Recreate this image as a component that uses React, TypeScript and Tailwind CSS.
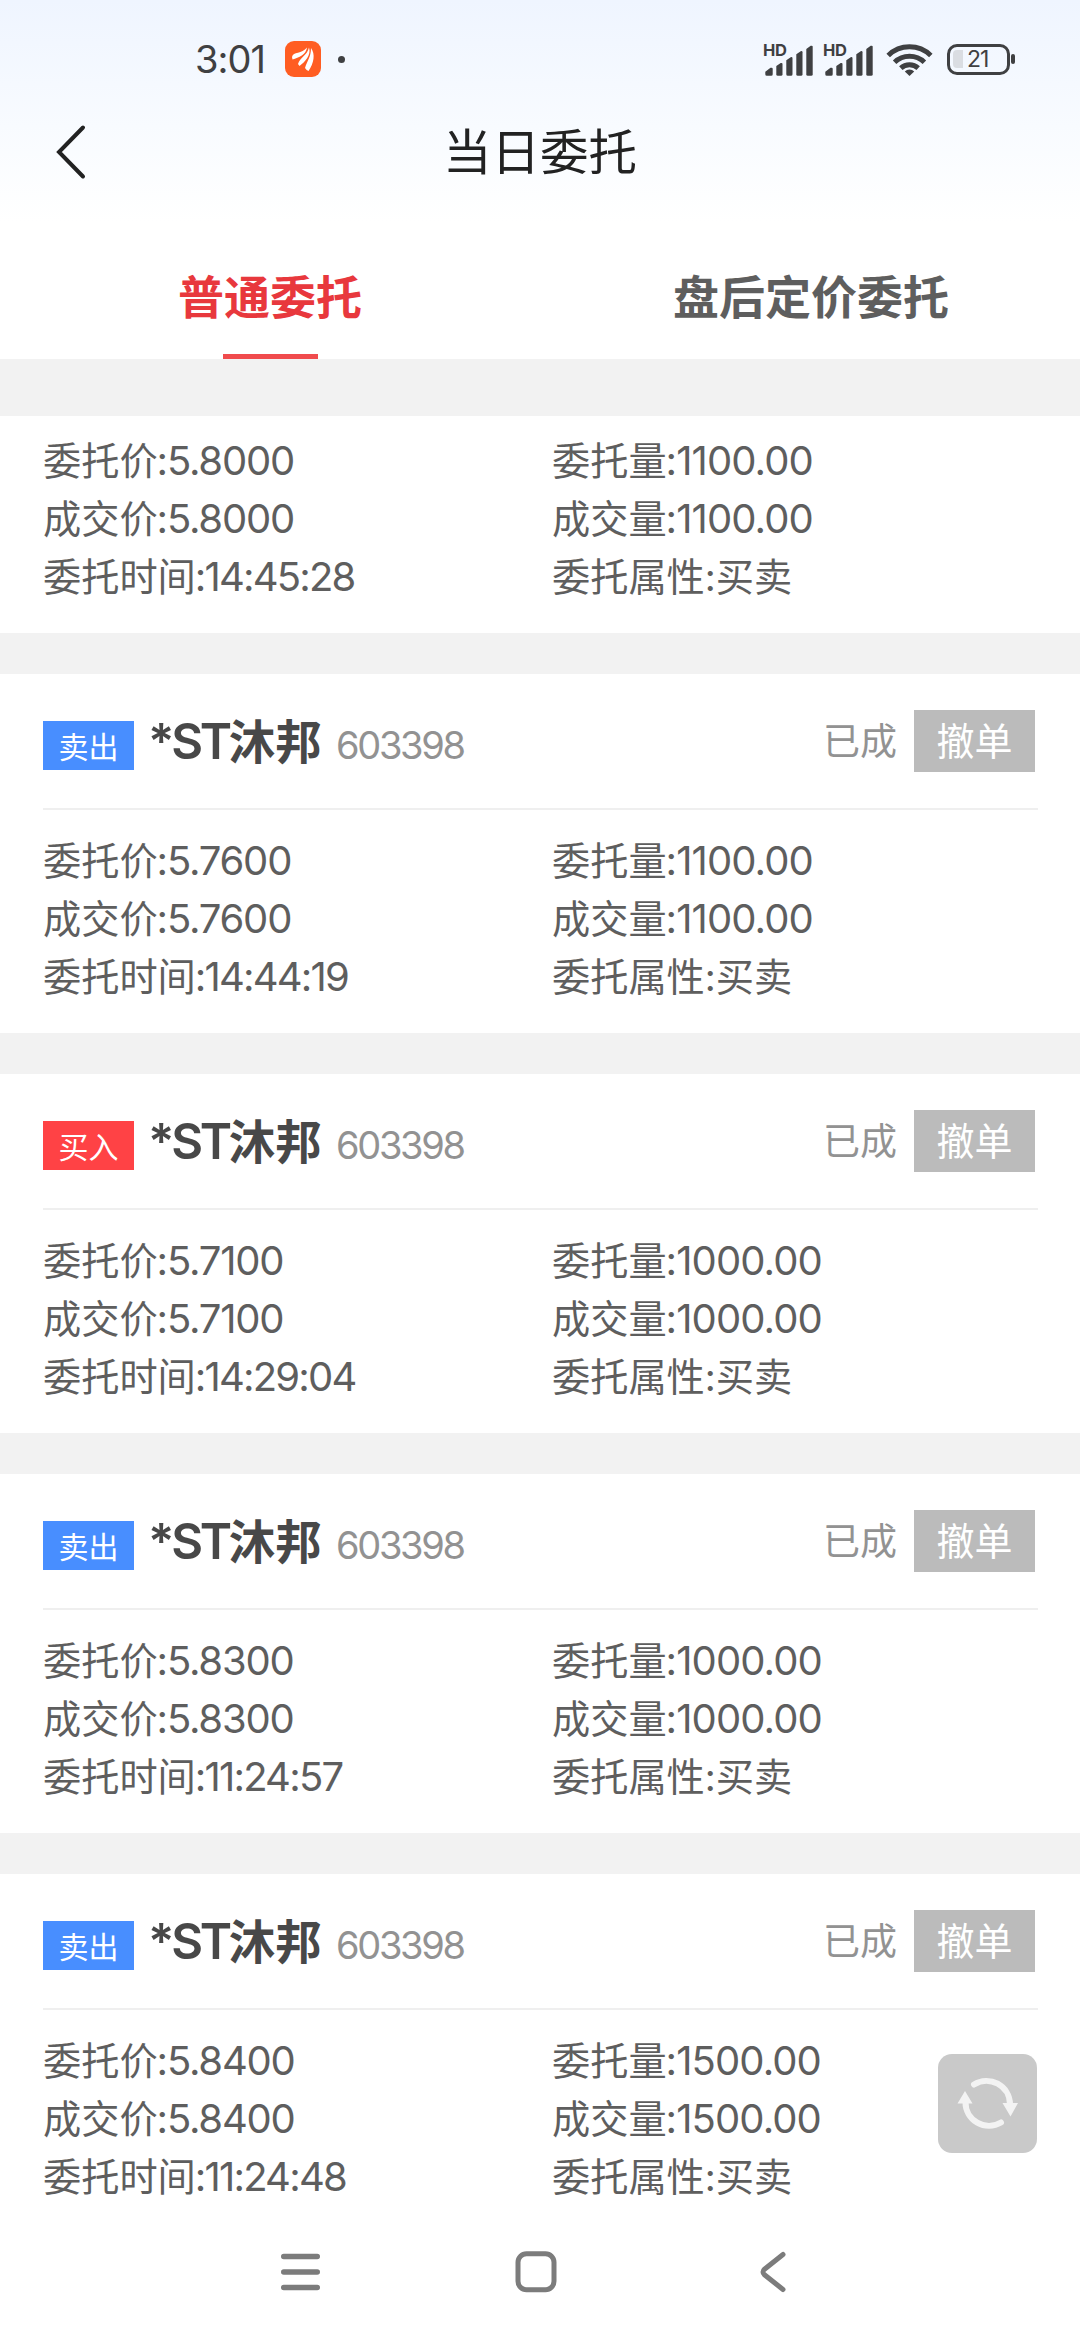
type Order = {
  side: "buy" | "sell";
  price: string;
  amount: string;
  time: string;
};

const orders: Order[] = [
  { side: "sell", price: "5.7600", amount: "1100.00", time: "14:44:19" },
  { side: "buy", price: "5.7100", amount: "1000.00", time: "14:29:04" },
  { side: "sell", price: "5.8300", amount: "1000.00", time: "11:24:57" },
  { side: "sell", price: "5.8400", amount: "1500.00", time: "11:24:48" },
];

function Signal() {
  return (
    <svg className="w-[52px] h-[36px]" viewBox="0 0 52 36" fill="#3f4042">
      <text x="0" y="14.8" fontSize="16.5" fontWeight="700" fontFamily="Inter, sans-serif" textLength="24">HD</text>
      <path d="M2.3 33.3v-2.6l5.2-3.9q2.2-.6 2.2 1v5.5q0 1.5-1.5 1.5h-4.4q-1.5 0-1.5-1.5z" />
      <path d="M13.3 33.3v-8.2l4.4-3.1q1.8-.5 1.8 1v10.3q0 1.5-1.5 1.5h-3.2q-1.5 0-1.5-1.5z" />
      <path d="M23.3 33.3v-14l4.4-3.1q1.8-.5 1.8 1v16.1q0 1.5-1.5 1.5h-3.2q-1.5 0-1.5-1.5z" />
      <path d="M33.3 33.3v-20l4.4-3.1q1.8-.5 1.8 1v22.1q0 1.5-1.5 1.5h-3.2q-1.5 0-1.5-1.5z" />
      <path d="M43.3 33.3v-25.4l4.4-3.1q2-.5 2 1v27.5q0 1.5-1.5 1.5h-3.4q-1.5 0-1.5-1.5z" />
    </svg>
  );
}

function StatusBar() {
  return (
    <div className="h-[118px] pl-[195px] pr-[65px] flex items-center justify-between text-[#3f4042]">
      <div className="flex items-center">
        <span className="w-[90px] text-[38px] leading-none tracking-[-1px]">3:01</span>
        <svg className="w-9 h-9" viewBox="0 0 36 36">
          <rect width="36" height="36" rx="9" fill="#ff5d22" />
          <path d="M7 16C8 10.5 17 13 22 6.5C21 14 14 16.5 7.5 18.5Z" fill="#fff" />
          <path d="M13 23C15 16 22 15 24 6.5C26.5 14 20 21 14.5 25Z" fill="#fff" />
          <path d="M20 27C22 20 26 16 26 7C30.5 13 29 22 23.5 30Q22 30 20 27Z" fill="#fff" />
        </svg>
        <span className="ml-[17px] w-[7px] h-[7px] rounded-full bg-[#3f4042]" />
      </div>
      <div className="flex items-center">
        <Signal />
        <span className="w-2" />
        <Signal />
        <svg className="ml-[11px] w-[47px] h-[36px]" viewBox="0 0 47 36" fill="none" stroke="#3f4042" strokeWidth="5">
          <path d="M2.2 14.5a30.5 30.5 0 0 1 42.6 0" />
          <path d="M8.6 21.2a21.5 21.5 0 0 1 29.8 0" />
          <path d="M14.8 27.2a12.8 12.8 0 0 1 17.4 0" />
          <path d="M23.5 35l-4.7-4.6a6.5 6.5 0 0 1 9.4 0z" fill="#3f4042" stroke="none" />
        </svg>
        <div className="ml-[14px] w-[63px] h-[31px] border-[3.5px] border-[#3f4042] rounded-[10px] flex items-center">
          <span className="ml-[3px] w-[10px] h-[18px] rounded-l-[4px] bg-[#dadde2]" />
          <span className="ml-[4px] text-[23px] leading-none tracking-[-1px]">21</span>
        </div>
        <span className="ml-[1px] w-1 h-[10px] rounded-full bg-[#3f4042]" />
      </div>
    </div>
  );
}

function Header() {
  return (
    <header className="h-[68px] grid grid-cols-[100px_1fr_100px] items-center">
      <svg className="ml-[54px] w-[34px] h-[56px]" viewBox="0 0 34 56" fill="none" stroke="#222" strokeWidth="4">
        <path d="M29 3.5L5 28l24 24.5" strokeLinecap="round" />
      </svg>
      <h1 className="pt-[2px] text-center text-[48.5px] leading-none text-[#222]">当日委托</h1>
    </header>
  );
}

function Tabs() {
  return (
    <nav className="h-[173px] grid grid-cols-2 text-[46px] font-bold leading-none text-center">
      <div className="flex flex-col items-center justify-between pt-[88px] text-[#e8383d]">
        <span>普通委托</span>
        <span className="w-[95px] h-[5px] bg-[#f04b4d]" />
      </div>
      <div className="pt-[88px] pl-[2px] text-[#5e5e5e]">
        <span>盘后定价委托</span>
      </div>
    </nav>
  );
}

function Details({ price, amount, time }: { price: string; amount: string; time: string }) {
  return (
    <div className="grid grid-cols-[509px_1fr] text-[38.2px] leading-[58px] text-[#5e5e5e]">
      <p>委托价<span className="-ml-px text-[40px] tracking-[-1.2px]">:{price}</span></p>
      <p>委托量<span className="-ml-px text-[40px] tracking-[-0.9px]">:{amount}</span></p>
      <p>成交价<span className="-ml-px text-[40px] tracking-[-1.2px]">:{price}</span></p>
      <p>成交量<span className="-ml-px text-[40px] tracking-[-0.9px]">:{amount}</span></p>
      <p>委托时间<span className="-ml-px text-[40px] tracking-[-1.8px]">:{time}</span></p>
      <p>委托属性:买卖</p>
    </div>
  );
}

function OrderCard({ order }: { order: Order }) {
  const sell = order.side === "sell";
  return (
    <section className="h-[359px] shrink-0 bg-white pl-[43px] pr-[42px]">
      <div className="h-[136px] border-b-2 border-[#efefef] flex items-start leading-none">
        <span
          className={`mt-[47px] w-[91px] h-[49px] flex items-center justify-center pt-[2px] text-[30px] text-white ${
            sell ? "bg-[#488eff]" : "bg-[#ff4245]"
          }`}
        >
          {sell ? "卖出" : "买入"}
        </span>
        <h2 className="mt-[43px] ml-[14px] w-[188px] whitespace-nowrap text-[46.5px] font-bold text-[#484848]">
          <span className="text-[49px] leading-none font-semibold tracking-[-3.3px]">*ST</span>沐邦
        </h2>
        <span className="mt-[52px] text-[38px] text-[#929292] tracking-[-2.3px]">603398</span>
        <span className="mt-[49px] ml-auto mr-[17px] text-[37px] text-[#929292]">已成</span>
        <button className="mt-[36px] mr-[3px] w-[121px] h-[62px] bg-[#bbb] text-[38px] text-white">撤单</button>
      </div>
      <div className="pt-[22px]">
        <Details price={order.price} amount={order.amount} time={order.time} />
      </div>
    </section>
  );
}

function NavBar() {
  return (
    <footer className="h-[136px] shrink-0 bg-white grid grid-cols-[281px_234px_244px_1fr]">
      <span />
      <svg className="mt-[48px] w-[39px] h-[40px]" viewBox="0 0 39 40" stroke="#7c7c7c" strokeWidth="5.6" strokeLinecap="round">
        <path d="M2.8 4.5h33.4M2.8 20h33.4M2.8 35.5h33.4" />
      </svg>
      <svg className="mt-[47px] w-[42px] h-[42px]" viewBox="0 0 42 42" fill="none" stroke="#7c7c7c" strokeWidth="5">
        <rect x="3" y="2.8" width="36" height="36" rx="8.5" />
      </svg>
      <svg className="mt-[47px] w-[28px] h-[42px]" viewBox="0 0 28 42" fill="none" stroke="#7c7c7c" strokeWidth="5" strokeLinecap="round">
        <path d="M24 3.5L5.5 18.2Q2.5 21 5.5 23.8L24 38.5" />
      </svg>
    </footer>
  );
}

export default function App() {
  return (
    <div className="relative w-[1080px] h-[2340px] overflow-hidden flex flex-col bg-[#f2f2f2] font-['Inter','Noto_Sans_CJK_SC',sans-serif]">
      <div className="h-[359px] shrink-0 bg-white bg-linear-to-b from-[#eff5ff] via-[#f8fbff] via-35% to-white to-62%">
        <StatusBar />
        <Header />
        <Tabs />
      </div>

      <main className="h-[1845px] shrink-0 overflow-hidden pt-[57px] flex flex-col gap-[41px]">
        {/* Bottom half of the card scrolled under the tabs */}
        <section className="h-[217px] shrink-0 bg-white pt-4 pl-[43px]">
          <Details price="5.8000" amount="1100.00" time="14:45:28" />
        </section>
        {orders.map((order) => (
          <OrderCard key={order.time} order={order} />
        ))}
      </main>

      <NavBar />

      {/* Floating refresh button */}
      <button className="absolute left-[938px] top-[2054px] w-[99px] h-[99px] rounded-[14px] bg-[#c9c9c9]">
        <svg className="w-full h-full" viewBox="0 0 99 99" fill="none" stroke="#f3f3f3" strokeWidth="6" strokeLinecap="round">
          <path d="M36 30.5A23.5 23.5 0 0 1 72 50" />
          <path d="M63 68.5A23.5 23.5 0 0 1 27.5 48" />
          <path d="M64.5 49h15.5l-7.5 13.5zM19.5 49.5h15l-7.5-12.5z" fill="#f3f3f3" stroke="none" />
        </svg>
      </button>
    </div>
  );
}
